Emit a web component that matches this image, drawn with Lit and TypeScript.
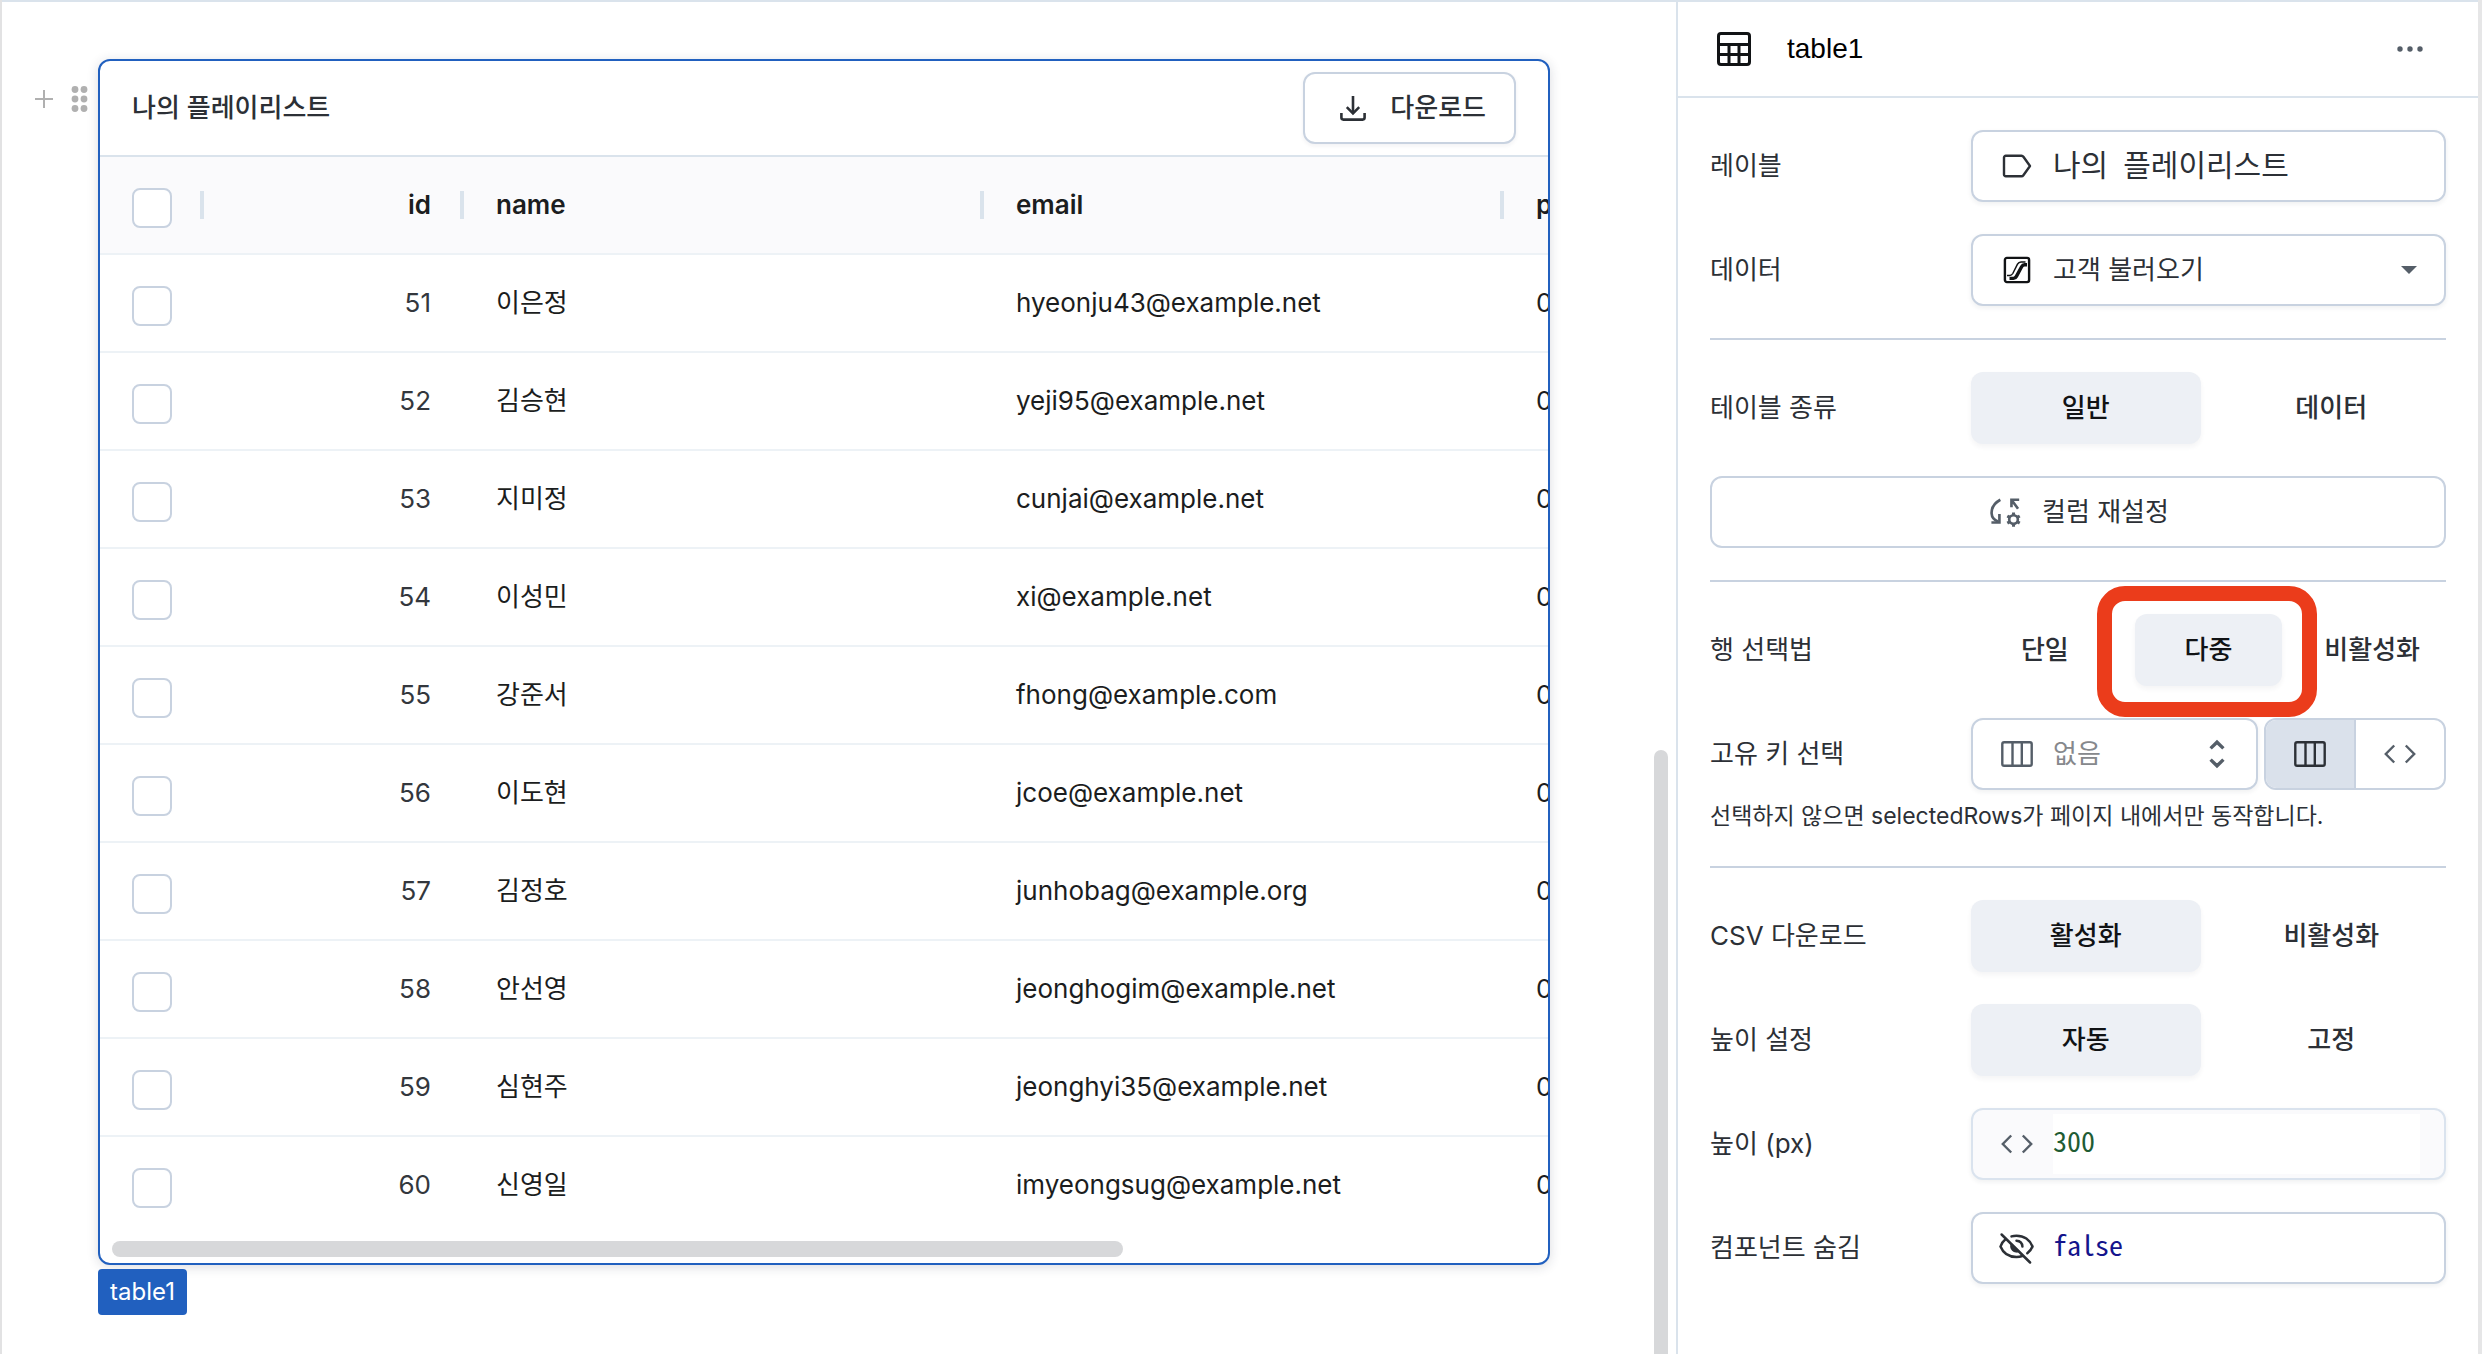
import { LitElement, html, css, svg } from "lit";
import { customElement, state } from "lit/decorators.js";

interface Row {
  id: number;
  name: string;
  email: string;
  phone: string;
}

const rows: Row[] = [
  { id: 51, name: "이은정", email: "hyeonju43@example.net", phone: "010" },
  { id: 52, name: "김승현", email: "yeji95@example.net", phone: "010" },
  { id: 53, name: "지미정", email: "cunjai@example.net", phone: "010" },
  { id: 54, name: "이성민", email: "xi@example.net", phone: "010" },
  { id: 55, name: "강준서", email: "fhong@example.com", phone: "010" },
  { id: 56, name: "이도현", email: "jcoe@example.net", phone: "010" },
  { id: 57, name: "김정호", email: "junhobag@example.org", phone: "010" },
  { id: 58, name: "안선영", email: "jeonghogim@example.net", phone: "010" },
  { id: 59, name: "심현주", email: "jeonghyi35@example.net", phone: "010" },
  { id: 60, name: "신영일", email: "imyeongsug@example.net", phone: "010" },
];

const icon = (w: number, h: number, body: unknown) => html`<svg
  width=${w}
  height=${h}
  viewBox="0 0 ${w} ${h}"
  fill="none"
  stroke="currentColor"
  aria-hidden="true"
>${body}</svg>`;

const plusIcon = icon(18, 18, svg`<path d="M9 0v18M0 9h18" stroke-width="2"/>`);

const gripIcon = icon(18, 26, svg`<g fill="currentColor" stroke="none">
  <circle cx="4" cy="3.5" r="3.4"/><circle cx="13" cy="3.5" r="3.4"/>
  <circle cx="4" cy="13" r="3.4"/><circle cx="13" cy="13" r="3.4"/>
  <circle cx="4" cy="22.5" r="3.4"/><circle cx="13" cy="22.5" r="3.4"/></g>`);

const downloadIcon = icon(26, 26, svg`<g stroke-width="2.6">
  <path d="M13 1v17"/><path d="M6.8 12.2l6.2 6.2 6.2-6.2"/>
  <path d="M1.4 18v4.6a2 2 0 0 0 2 2h19.2a2 2 0 0 0 2-2V18"/></g>`);

const tableIcon = icon(34, 34, svg`<g stroke-width="3">
  <rect x="1.5" y="1.5" width="31" height="31" rx="2.5"/>
  <path d="M1.5 12.5h31M1.5 22.5h31M12 12.5v20M22 12.5v20"/></g>`);

const moreIcon = icon(26, 6, svg`<g fill="currentColor" stroke="none">
  <circle cx="3" cy="3" r="2.7"/><circle cx="13" cy="3" r="2.7"/><circle cx="23" cy="3" r="2.7"/></g>`);

const tagIcon = icon(34, 28, svg`<path stroke-width="2.4" stroke-linejoin="round"
  d="M5.8 3.8h15.6a2.4 2.4 0 0 1 2 1L30 14l-6.6 9.2a2.4 2.4 0 0 1-2 1H5.8a1.8 1.8 0 0 1-1.8-1.8V5.6a1.8 1.8 0 0 1 1.8-1.8z"/>`);

const queryIcon = icon(34, 28, svg`
  <rect x="4.9" y="1.9" width="24.2" height="24.2" rx="2" stroke-width="2.4"/>
  <path d="M7 19.6h2.5c1.800 0 2.500-.7 3.300-2.100l4.700-9.300c.9-1.700 1.800-2.300 3.500-2.300h4.500" stroke-width="1.500"/>
  <path d="M9.500 22.400h4c1.500 0 2.100-.5 2.900-2l5.200-9.700c.8-1.500 1.500-1.900 3-1.900h2.400" stroke-width="3.400"/>`);

const resetIcon = html`<svg width="32" height="32" viewBox="0 0 34 34" fill="none" stroke="currentColor" aria-hidden="true">
  <g stroke-width="2.800">
  <path d="M11 4C4.500 7.500 1.500 13 1.700 18.500c.2 3.500 2.500 7 6.800 8.500"/>
  <path d="M1.500 28.200h8.500v-9"/>
  <path d="M31 4h-8.200v8M22.800 4l7 9.500"/>
  <circle cx="25" cy="25" r="4.600"/></g>
  <path stroke-width="3.200" d="M25 20.400v-3M25 29.600v3M21 22.700l-2.600-1.500M29 27.300l2.600 1.500M21 27.300l-2.600 1.500M29 22.700l2.600-1.500"/></svg>`;

const columnsIcon = icon(34, 28, svg`<g stroke-width="2.400">
  <rect x="2.300" y="2.300" width="29.400" height="23.400" rx="1.800"/>
  <path d="M12.500 2v24M21.800 2v24"/></g>`);

const codeIcon = icon(34, 28, svg`<path stroke-width="2.400" d="M11.200 5.500L2.800 14l8.400 8.500M22.800 5.500L31.200 14l-8.400 8.500"/>`);

const hiddenIcon = icon(36, 34, svg`
  <path stroke-width="2.500" stroke-linecap="round" d="M2.600 3.500l28.500 28"/>
  <g stroke-width="2.500" stroke-linecap="round">
  <path d="M6.500 8.200C4.200 10 2.500 12.300 1.500 15.500c2.600 6.500 8.600 10.500 16 10.500 2 0 4-.3 5.700-1"/>
  <path d="M12.500 5.400c1.600-.5 3.300-.7 5-.7 7.400 0 13.400 4.200 16 10.800-1 2.600-2.800 4.900-5.200 6.700"/>
  <path d="M17.500 9.700c3.300.2 5.700 2.500 5.900 5.800"/></g>
  <path stroke="none" fill="currentColor" d="M12.400 12c-1 1-1.400 2.400-1.200 4 .4 3 2.700 5.200 5.700 5.600 1.600.2 3-.1 4.200-1z"/>`);

const sortIcon = icon(16, 30, svg`<path stroke-width="3.400" d="M1.600 9.400L8 3.200l6.400 6.200M1.600 20.600L8 26.800l6.400-6.200"/>`);

const caretIcon = icon(16, 8, svg`<path d="M0 0h16l-8 8z" fill="currentColor" stroke="none"/>`);

const shared = css`
  *,
  *::before,
  *::after {
    box-sizing: border-box;
  }
  svg {
    display: block;
    flex: none;
  }
  button,
  input,
  select {
    margin: 0;
    font: inherit;
    color: inherit;
  }
  button {
    display: flex;
    align-items: center;
    justify-content: center;
    padding: 0;
    border: 0;
    background: none;
    cursor: pointer;
  }
`;

@customElement("playlist-table")
export class PlaylistTable extends LitElement {
  static styles = [
    shared,
    css`
      :host {
        display: block;
        min-width: 0;
      }
      .card {
        border: 2px solid #2160bf;
        border-radius: 12px;
        background: #fff;
        overflow: hidden;
        box-shadow: 0 2px 12px rgba(30, 40, 60, 0.16);
      }
      .bar {
        display: flex;
        align-items: center;
        justify-content: space-between;
        height: 96px;
        padding: 0 32px;
        border-bottom: 2px solid #dae3ec;
      }
      h2 {
        margin: 0;
        font-size: 26px;
        line-height: 36px;
        font-weight: 500;
        color: #2c3036;
      }
      .download {
        gap: 24px;
        height: 72px;
        padding: 0 28px 0 35px;
        border: 2px solid #c8d2e0;
        border-radius: 12px;
        background: #fff;
        box-shadow: 0 2px 4px rgba(30, 40, 60, 0.06);
        font-weight: 500;
        color: #2c3036;
      }
      .scroller {
        overflow-x: auto;
        scrollbar-width: none;
      }
      table {
        width: 1922px;
        table-layout: fixed;
        border-collapse: separate;
        border-spacing: 0;
      }
      .c-check {
        width: 102px;
      }
      .c-id {
        width: 260px;
      }
      .c-text {
        width: 520px;
      }
      th,
      td {
        position: relative;
        height: 98px;
        padding: 0 31px 0 34px;
        border-bottom: 2px solid #edf2f6;
        text-align: left;
        font-weight: 400;
        color: #1b1d20;
        white-space: nowrap;
      }
      th {
        background: #fafafc;
        font-weight: 600;
      }
      th:first-child,
      td:first-child {
        padding: 0 30px 0 32px;
      }
      th:not(:last-child)::after {
        content: "";
        position: absolute;
        z-index: 1;
        right: -2px;
        top: 34px;
        width: 4px;
        height: 28px;
        background: #dae3ec;
      }
      tbody tr:last-child td {
        border-bottom-color: transparent;
      }
      .num {
        text-align: right;
      }
      td.num {
        color: #33373d;
      }
      .tick {
        display: block;
        appearance: none;
        width: 40px;
        height: 40px;
        margin-top: 6px;
        border: 2px solid #c8d2e0;
        border-radius: 8px;
        background: #fff;
      }
      .tick:checked {
        background: #2160bf;
      }
      .track {
        padding: 6px 12px;
      }
      .thumb {
        width: 71%;
        height: 16px;
        border-radius: 8px;
        background: #d7d8da;
      }
      .tag {
        width: fit-content;
        margin-top: 4px;
        padding: 0 12px;
        border-radius: 4px;
        background: #2160bf;
        color: #fff;
        font-size: 24px;
        line-height: 46px;
      }
    `,
  ];

  render() {
    return html`
      <section class="card">
        <header class="bar">
          <h2>나의 플레이리스트</h2>
          <button class="download" type="button">${downloadIcon}<span>다운로드</span></button>
        </header>
        <div class="scroller">
          <table>
            <colgroup>
              <col class="c-check" />
              <col class="c-id" />
              <col class="c-text" />
              <col class="c-text" />
              <col class="c-text" />
            </colgroup>
            <thead>
              <tr>
                <th><input class="tick" type="checkbox" aria-label="전체 선택" /></th>
                <th class="num">id</th>
                <th>name</th>
                <th>email</th>
                <th>phone</th>
              </tr>
            </thead>
            <tbody>
              ${rows.map(
                (r) => html`<tr>
                  <td><input class="tick" type="checkbox" aria-label=${r.name} /></td>
                  <td class="num">${r.id}</td>
                  <td>${r.name}</td>
                  <td>${r.email}</td>
                  <td>${r.phone}</td>
                </tr>`
              )}
            </tbody>
          </table>
        </div>
        <div class="track"><div class="thumb"></div></div>
      </section>
      <div class="tag">table1</div>
    `;
  }
}

@customElement("property-panel")
export class PropertyPanel extends LitElement {
  @state() private picked: Record<string, string> = {
    kind: "일반",
    rows: "다중",
    csv: "활성화",
    height: "자동",
  };

  static styles = [
    shared,
    css`
      :host {
        display: block;
        background: #fff;
        color: #2c3036;
      }
      .head {
        display: flex;
        align-items: center;
        gap: 36px;
        height: 96px;
        padding: 0 55px 0 39px;
        border-bottom: 2px solid #dae3ec;
        color: #111315;
      }
      h1 {
        flex: 1;
        margin: 0;
        font: 400 28px/36px "Liberation Sans", Arial, sans-serif;
        color: #000;
      }
      .more {
        height: 40px;
        color: #555e68;
      }
      .body {
        display: flex;
        flex-direction: column;
        gap: 32px;
        padding: 32px;
      }
      .row {
        display: grid;
        grid-template-columns: 261px minmax(0, 1fr);
        align-items: center;
      }
      .row .hint {
        grid-column: 1 / -1;
      }
      hr {
        width: 100%;
        height: 2px;
        margin: 0;
        border: 0;
        background: #c8d2e0;
      }
      .field {
        display: flex;
        align-items: center;
        gap: 19px;
        height: 72px;
        min-width: 0;
        padding: 0 27px;
        border: 2px solid #c8d2e0;
        border-radius: 12px;
        background: #fff;
        box-shadow: 0 2px 5px rgba(30, 40, 60, 0.07);
      }
      .icon {
        display: flex;
        justify-content: center;
        flex: none;
        width: 34px;
      }
      .icon.muted,
      .end {
        color: #555e68;
      }
      .icon.strong {
        color: #111315;
      }
      .end {
        pointer-events: none;
      }
      .key .end {
        padding-right: 4px;
      }
      .field input,
      .field select {
        flex: 1;
        min-width: 0;
        height: 60px;
        padding: 0;
        border: 0;
        outline: 0;
        background: transparent;
        appearance: none;
      }
      .field input {
        padding-bottom: 8px;
        font: 400 28px/36px "Noto Sans Mono CJK KR", "Liberation Mono", "Noto Sans CJK KR", monospace;
      }
      .field input.title {
        padding-bottom: 6px;
        font-size: 30px;
      }
      .field select.none {
        color: #86888c;
      }
      .field.readonly {
        padding-right: 24px;
        border-color: #dae3ee;
        background: #fafafc;
      }
      .field.readonly input {
        background: #fff;
        color: #1f5c33;
      }
      .field input.bool {
        color: #14148c;
      }
      .segments {
        display: grid;
        grid-auto-flow: column;
        grid-auto-columns: minmax(0, 1fr);
        gap: 16px;
      }
      .segment {
        position: relative;
        display: flex;
        align-items: center;
        justify-content: center;
        height: 72px;
        border-radius: 12px;
        font-weight: 500;
        white-space: nowrap;
        cursor: pointer;
      }
      .segment input {
        position: absolute;
        inset: 0;
        appearance: none;
        cursor: pointer;
      }
      .segment.on {
        background: #edf0f5;
        color: #111315;
        box-shadow: 0 3px 5px rgba(30, 40, 60, 0.05);
      }
      .marker {
        position: absolute;
        z-index: 1;
        inset: -28px -35px -31px -38px;
        border: 15px solid #eb3c1b;
        border-radius: 28px;
        pointer-events: none;
      }
      .reset {
        gap: 20px;
        height: 72px;
        padding-left: 3px;
        border: 2px solid #c8d2e0;
        border-radius: 12px;
      }
      .reset svg {
        color: #555e68;
      }
      .key {
        display: grid;
        grid-template-columns: minmax(0, 1fr) 182px;
        gap: 6px;
      }
      .toggle {
        display: flex;
        height: 72px;
        border: 2px solid #c8d2e0;
        border-radius: 12px;
        overflow: hidden;
      }
      .toggle button {
        flex: 1;
        color: #555e68;
      }
      .toggle button + button {
        border-left: 2px solid #c8d2e0;
      }
      .toggle .on {
        background: #dae1eb;
        color: #2c3036;
      }
      .hint {
        margin: 8px 0 0;
        font-size: 23px;
        line-height: 36px;
      }
    `,
  ];

  private segments(key: string, label: string, options: string[], marked = "") {
    return html`<div class="row">
      <span id=${key}>${label}</span>
      <div class="segments" role="radiogroup" aria-labelledby=${key}>
        ${options.map((o) => {
          const on = this.picked[key] === o;
          return html`<label class="segment ${on ? "on" : ""}">
            <input
              type="radio"
              name=${key}
              .checked=${on}
              @change=${() => (this.picked = { ...this.picked, [key]: o })}
            />${o}${marked === o ? html`<i class="marker"></i>` : ""}
          </label>`;
        })}
      </div>
    </div>`;
  }

  render() {
    return html`
      <header class="head">
        ${tableIcon}
        <h1>table1</h1>
        <button class="more" type="button" aria-label="더 보기">${moreIcon}</button>
      </header>
      <div class="body">
        <div class="row">
          <label for="label">레이블</label>
          <div class="field">
            <span class="icon">${tagIcon}</span>
            <input id="label" class="title" type="text" value="나의 플레이리스트" />
          </div>
        </div>
        <div class="row">
          <label for="data">데이터</label>
          <div class="field">
            <span class="icon strong">${queryIcon}</span>
            <select id="data"><option>고객 불러오기</option></select>
            <span class="end">${caretIcon}</span>
          </div>
        </div>
        <hr />
        ${this.segments("kind", "테이블 종류", ["일반", "데이터"])}
        <button class="reset" type="button">${resetIcon}<span>컬럼 재설정</span></button>
        <hr />
        ${this.segments("rows", "행 선택법", ["단일", "다중", "비활성화"], "다중")}
        <div class="row">
          <label for="key">고유 키 선택</label>
          <div class="key">
            <div class="field">
              <span class="icon muted">${columnsIcon}</span>
              <select id="key" class="none"><option>없음</option></select>
              <span class="end">${sortIcon}</span>
            </div>
            <div class="toggle">
              <button class="on" type="button" aria-label="컬럼" aria-pressed="true">${columnsIcon}</button>
              <button type="button" aria-label="코드" aria-pressed="false">${codeIcon}</button>
            </div>
          </div>
          <p class="hint">선택하지 않으면 selectedRows가 페이지 내에서만 동작합니다.</p>
        </div>
        <hr />
        ${this.segments("csv", "CSV 다운로드", ["활성화", "비활성화"])}
        ${this.segments("height", "높이 설정", ["자동", "고정"])}
        <div class="row">
          <label for="px">높이 (px)</label>
          <div class="field readonly">
            <span class="icon muted">${codeIcon}</span>
            <input id="px" type="text" readonly value="300" />
          </div>
        </div>
        <div class="row">
          <label for="hidden">컴포넌트 숨김</label>
          <div class="field">
            <span class="icon">${hiddenIcon}</span>
            <input id="hidden" class="bool" type="text" value="false" />
          </div>
        </div>
      </div>
    `;
  }
}

@customElement("app-root")
export class AppRoot extends LitElement {
  static styles = [
    shared,
    css`
      :host {
        display: block;
        font: 400 26px/36px Inter, "Noto Sans CJK KR", sans-serif;
        color: #2c3036;
      }
      .app {
        display: grid;
        grid-template-columns: minmax(0, 1fr) 802px;
        min-height: 100vh;
        border-left: 2px solid #e2e2e3;
        border-right: 4px solid #e6e6e7;
        background: #fff;
      }
      .canvas {
        position: relative;
        display: grid;
        grid-template-columns: 96px minmax(0, 1fr);
        align-items: start;
        padding: 57px 126px 24px 0;
        border-top: 2px solid #dae3ec;
      }
      .handles {
        display: flex;
        align-items: center;
        justify-content: flex-end;
        gap: 18px;
        padding: 27px 9px 0 0;
        color: #b0b0b0;
      }
      .side {
        border-top: 2px solid #dae3ec;
        border-left: 2px solid #dae3ec;
      }
      .thumb {
        position: absolute;
        right: 8px;
        bottom: 0;
        width: 14px;
        height: 604px;
        border-radius: 7px 7px 0 0;
        background: #d7d8da;
      }
    `,
  ];

  render() {
    return html`<div class="app">
      <main class="canvas">
        <div class="handles">
          <button type="button" aria-label="추가">${plusIcon}</button>
          <button type="button" aria-label="이동">${gripIcon}</button>
        </div>
        <playlist-table></playlist-table>
        <div class="thumb"></div>
      </main>
      <property-panel class="side"></property-panel>
    </div>`;
  }
}
